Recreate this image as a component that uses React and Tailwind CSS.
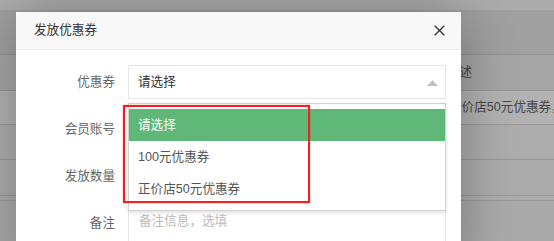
import React from 'react'

const font = { fontFamily: '"Liberation Sans", "Noto Sans CJK SC", sans-serif' }

/* ── Page behind the dialog ─────────────────────────────────────────── */
function BackgroundPage() {
  return (
    <div className="w-full h-full bg-[#f4f4f4] text-[12.6px] text-[#666]">
      <div className="h-[10px] bg-[#f6f6f6]" />
      <div className="h-[45px] bg-[#e6e6e6] border-b border-[#d6d6d6]" />
      <div className="flex items-center h-[36px] bg-[#ececec] border-b border-[#d9d9d9] whitespace-nowrap">
        <span className="w-[447px] shrink-0" />
        <span>描述</span>
      </div>
      <div className="flex items-center h-[34px] bg-[#ffffff] border-b border-[#d9d9d9] whitespace-nowrap overflow-hidden">
        <span className="w-[449px] shrink-0" />
        <span>正价店50元优惠券，满100元可用</span>
      </div>
      <div className="h-[35px] bg-[#f8f8f8] border-b border-[#d9d9d9]" />
      <div className="h-[36px] bg-[#f6f6f6] border-b border-[#d9d9d9]" />
      <div className="h-[5px] bg-[#f6f6f6] border-b border-[#dedede]" />
    </div>
  )
}

/* ── Form row ───────────────────────────────────────────────────────── */
function Row({ label, children, className = '' }) {
  return (
    <div className={`flex ${className}`}>
      <label className="w-[112px] shrink-0 pr-[13px] text-right leading-[34px] text-[#666]">{label}</label>
      {children}
    </div>
  )
}

function CouponDialog() {
  return (
    <div className="absolute left-[16px] top-[12px] w-[445px] h-[260px] bg-white shadow-[1px_1px_50px_rgba(0,0,0,0.3)] text-[12.6px]">
      <div className="flex items-center justify-between h-[38px] bg-[#f8f8f8] border-b border-[#eeeeee] pl-[18px] pr-[16px]">
        <span className="text-[#333]">发放优惠券</span>
        <svg width="11" height="11" viewBox="0 0 11 11">
          <path d="M0.7 0.7L10.3 10.3M10.3 0.7L0.7 10.3" stroke="#333" strokeWidth="1.3" />
        </svg>
      </div>

      <div className="flex flex-col gap-[13px] pt-[15px]">
        <Row label="优惠券" className="relative z-10">
          <div className="relative w-[318px] h-[34px] border border-[#e6e6e6] flex items-center pl-[9px] text-[#333]">
            请选择
            <svg className="absolute right-[7px] top-[14px]" width="11" height="6" viewBox="0 0 11 6">
              <path d="M5.5 0L11 6H0Z" fill="#c2c2c2" />
            </svg>
          </div>
          <div className="absolute left-[112px] top-[38px] w-[318px] border border-[#d2d2d2] bg-white py-[4.5px] shadow-[0_2px_4px_rgba(0,0,0,0.12)]">
            <div className="h-[32.4px] leading-[32.4px] pl-[9px] bg-[#5fb878] text-white">请选择</div>
            <div className="h-[32.4px] leading-[32.4px] pl-[9px] text-[#555]">100元优惠券</div>
            <div className="h-[32.4px] leading-[32.4px] pl-[9px] text-[#555]">正价店50元优惠券</div>
          </div>
        </Row>
        <Row label="会员账号">
          <div className="w-[318px] h-[34px] border border-[#e6e6e6]" />
        </Row>
        <Row label="发放数量">
          <div className="w-[318px] h-[34px] border border-[#e6e6e6]" />
        </Row>
        <Row label="备注">
          <div className="w-[318px] h-[80px] border border-[#e6e6e6] px-[10px] py-[5.4px] leading-[18px] text-[#bbbbbb]">
            备注信息，选填
          </div>
        </Row>
      </div>

      {/* red annotation frame */}
      <div className="absolute left-[107px] top-[93px] w-[187px] h-[98px] border-2 border-[#f41f1f] z-20 shadow-[0_0_2px_rgba(255,0,0,0.35)]" />
    </div>
  )
}

export default function App() {
  return (
    <div className="relative w-[554px] h-[241px] overflow-hidden" style={font}>
      <BackgroundPage />
      <div className="absolute inset-0 bg-black/30" />
      <CouponDialog />
    </div>
  )
}
